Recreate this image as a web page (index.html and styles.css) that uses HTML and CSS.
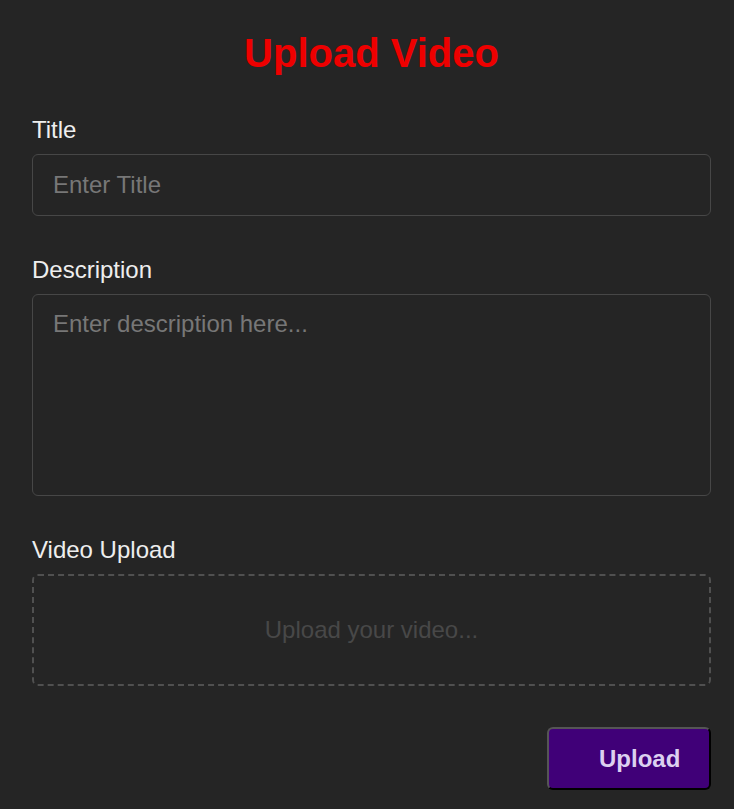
FILE: index.html
```html
<!DOCTYPE html>
<html>
<head>
<meta charset="utf-8">
<link rel="stylesheet" href="styles.css">
</head>
<body>
<div class="page">
  <h1 class="heading">Upload Video</h1>
  <div class="field">
    <label class="label">Title</label>
    <input class="input" type="text" placeholder="Enter Title">
  </div>
  <div class="field">
    <label class="label">Description</label>
    <textarea class="textarea" placeholder="Enter description here..."></textarea>
  </div>
  <div class="field">
    <label class="label">Video Upload</label>
    <div class="dropzone">Upload your video...</div>
  </div>
  <div class="actions">
    <button class="btn">Upload</button>
  </div>
</div>
</body>
</html>
```
FILE: styles.css
```css
html, body {
  margin: 0;
  padding: 0;
  background: #252525;
  font-family: "Liberation Sans", Arial, sans-serif;
}
.page {
  width: 679px;
  margin-left: 32px;
  padding-top: 30px;
  display: flex;
  flex-direction: column;
}
.heading {
  margin: 0;
  text-align: center;
  color: #ee0000;
  font-size: 40px;
  font-weight: bold;
  line-height: 46px;
}
.field {
  display: flex;
  flex-direction: column;
  margin-top: 40px;
}
.field + .field {
  margin-top: 40px;
}
.label {
  color: #eeeeee;
  font-size: 24px;
  line-height: 28px;
  margin-bottom: 10px;
}
.input, .textarea {
  box-sizing: border-box;
  width: 100%;
  background: #252525;
  border: 1px solid #474747;
  border-radius: 6px;
  color: #eeeeee;
  font-family: "Liberation Sans", Arial, sans-serif;
  font-size: 24px;
  padding: 0 20px;
  outline: none;
}
.input {
  height: 62px;
}
.textarea {
  height: 202px;
  padding-top: 15px;
  resize: none;
}
.input::placeholder, .textarea::placeholder {
  color: #777777;
}
.dropzone {
  box-sizing: border-box;
  height: 112px;
  border: 2px dashed #505050;
  border-radius: 6px;
  display: flex;
  align-items: center;
  justify-content: center;
  color: #484848;
  font-size: 24px;
}
.actions {
  display: flex;
  justify-content: flex-end;
  margin-top: 41px;
}
.btn {
  width: 164px;
  height: 63px;
  background: #400078;
  border: 2px outset #555;
  border-right-color: #0a0a0a;
  border-bottom-color: #0a0a0a;
  border-radius: 6px;
  color: #dcd0f0;
  font-family: "Liberation Sans", Arial, sans-serif;
  font-weight: bold;
  font-size: 24px;
  padding: 0 30px 0 50px;
}
```
